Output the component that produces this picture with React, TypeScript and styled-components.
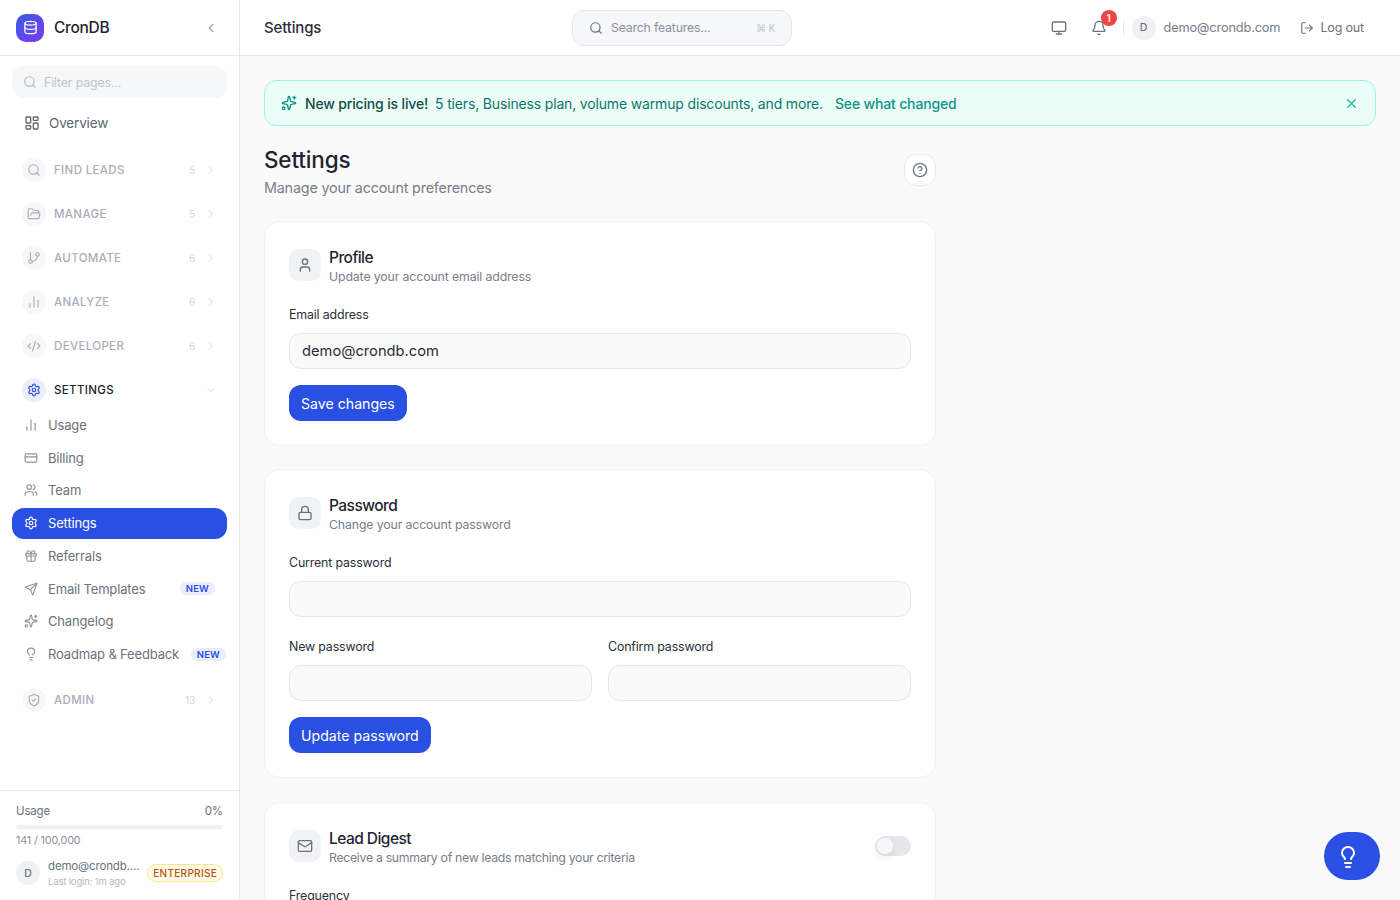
import React from 'react';
import styled, { createGlobalStyle } from 'styled-components';
import {
	Bell,
	ChartNoAxesColumn,
	ChevronDown,
	ChevronLeft,
	ChevronRight,
	CircleHelp,
	CodeXml,
	CreditCard,
	Database,
	FolderOpen,
	Gift,
	GitBranch,
	LayoutDashboard,
	Lightbulb,
	Lock,
	LogOut,
	Mail,
	Monitor,
	Search,
	Send,
	Settings,
	ShieldCheck,
	Sparkles,
	User,
	Users,
	X
} from 'lucide-react';

const BLUE = '#2a4fe3';

const closedGroups = [
	{ label: 'FIND LEADS', count: 5, icon: Search },
	{ label: 'MANAGE', count: 5, icon: FolderOpen },
	{ label: 'AUTOMATE', count: 6, icon: GitBranch },
	{ label: 'ANALYZE', count: 6, icon: ChartNoAxesColumn },
	{ label: 'DEVELOPER', count: 6, icon: CodeXml }
];

const settingsItems = [
	{ label: 'Usage', icon: ChartNoAxesColumn },
	{ label: 'Billing', icon: CreditCard },
	{ label: 'Team', icon: Users },
	{ label: 'Settings', icon: Settings, active: true },
	{ label: 'Referrals', icon: Gift },
	{ label: 'Email Templates', icon: Send, isNew: true },
	{ label: 'Changelog', icon: Sparkles },
	{ label: 'Roadmap & Feedback', icon: Lightbulb, isNew: true, wide: true }
];

export default function App() {
	return (
		<Page>
			<GlobalStyle />
			<Sidebar>
				<Brand>
					<LogoMark>
						<Database size={15} strokeWidth={2} />
					</LogoMark>
					<BrandName>CronDB</BrandName>
					<ChevronLeft size={14} color="#9ca3af" />
				</Brand>
				<Nav>
					<FilterBox>
						<Search size={14} color="#b4b8c2" />
						<span>Filter pages...</span>
					</FilterBox>
					<OverviewLink>
						<LayoutDashboard size={16} />
						Overview
					</OverviewLink>
					{closedGroups.map(group => (
						<GroupRow key={group.label}>
							<GroupIcon>
								<group.icon size={14} />
							</GroupIcon>
							<GroupLabel>{group.label}</GroupLabel>
							<GroupCount>{group.count}</GroupCount>
							<ChevronRight size={12} color="#d1d5db" />
						</GroupRow>
					))}
					<GroupRow>
						<GroupIcon $open>
							<Settings size={14} />
						</GroupIcon>
						<GroupLabel $open>SETTINGS</GroupLabel>
						<ChevronDown size={12} color="#d1d5db" />
					</GroupRow>
					<SubList>
						{settingsItems.map(item => (
							<SubItem key={item.label} $active={item.active} $wide={item.wide}>
								<item.icon size={14} />
								<SubLabel>{item.label}</SubLabel>
								{item.isNew && <NewBadge>NEW</NewBadge>}
							</SubItem>
						))}
					</SubList>
					<AdminRow>
						<GroupIcon>
							<ShieldCheck size={14} />
						</GroupIcon>
						<GroupLabel>ADMIN</GroupLabel>
						<GroupCount>13</GroupCount>
						<ChevronRight size={12} color="#d1d5db" />
					</AdminRow>
				</Nav>
				<SideFooter>
					<UsageHead>
						<span>Usage</span>
						<span>0%</span>
					</UsageHead>
					<UsageTrack />
					<UsageCount>141 / 100,000</UsageCount>
					<AccountRow>
						<Avatar>D</Avatar>
						<AccountText>
							<AccountEmail>demo@crondb.com</AccountEmail>
							<LastLogin>Last login: 1m ago</LastLogin>
						</AccountText>
						<PlanBadge>ENTERPRISE</PlanBadge>
					</AccountRow>
				</SideFooter>
			</Sidebar>
			<Column>
				<TopBar>
					<TopTitle>Settings</TopTitle>
					<SearchBox>
						<Search size={14} color="#6b7280" />
						<SearchText>Search features...</SearchText>
						<Shortcut>⌘ K</Shortcut>
					</SearchBox>
					<TopActions>
						<Monitor size={16} color="#6b7280" />
						<BellWrap>
							<Bell size={16} color="#6b7280" />
							<BellBadge>1</BellBadge>
						</BellWrap>
						<Divider />
						<Avatar>D</Avatar>
						<TopEmail>demo@crondb.com</TopEmail>
						<LogoutLink>
							<LogOut size={14} />
							Log out
						</LogoutLink>
					</TopActions>
				</TopBar>
				<Main>
					<Banner>
						<Sparkles size={16} color="#0d9488" />
						<BannerStrong>New pricing is live!</BannerStrong>
						<BannerText>5 tiers, Business plan, volume warmup discounts, and more.</BannerText>
						<BannerLink>See what changed</BannerLink>
						<BannerClose>
							<X size={15} color="#14b8a6" />
						</BannerClose>
					</Banner>
					<Content>
						<PageHead>
							<div>
								<PageTitle>Settings</PageTitle>
								<PageSub>Manage your account preferences</PageSub>
							</div>
							<HelpButton>
								<CircleHelp size={16} />
							</HelpButton>
						</PageHead>
						<Card>
							<CardHead>
								<CardIcon>
									<User size={16} />
								</CardIcon>
								<CardTitles>
									<CardTitle>Profile</CardTitle>
									<CardSub>Update your account email address</CardSub>
								</CardTitles>
							</CardHead>
							<Label>Email address</Label>
							<Field defaultValue="demo@crondb.com" />
							<PrimaryButton>Save changes</PrimaryButton>
						</Card>
						<Card>
							<CardHead>
								<CardIcon>
									<Lock size={16} />
								</CardIcon>
								<CardTitles>
									<CardTitle>Password</CardTitle>
									<CardSub>Change your account password</CardSub>
								</CardTitles>
							</CardHead>
							<Label>Current password</Label>
							<Field type="password" />
							<FieldGrid>
								<div>
									<Label>New password</Label>
									<Field type="password" />
								</div>
								<div>
									<Label>Confirm password</Label>
									<Field type="password" />
								</div>
							</FieldGrid>
							<PrimaryButton>Update password</PrimaryButton>
						</Card>
						<Card>
							<CardHead>
								<CardIcon>
									<Mail size={16} />
								</CardIcon>
								<CardTitles>
									<CardTitle>Lead Digest</CardTitle>
									<CardSub $tight>Receive a summary of new leads matching your criteria</CardSub>
								</CardTitles>
								<Toggle>
									<ToggleKnob />
								</Toggle>
							</CardHead>
							<Label>Frequency</Label>
							<Field />
						</Card>
					</Content>
				</Main>
			</Column>
			<HelpFab>
				<Lightbulb size={24} />
			</HelpFab>
		</Page>
	);
}

const GlobalStyle = createGlobalStyle`
	html, body {
		margin: 0;
		height: 100%;
		overflow: hidden;
	}

	body {
		font-family: Inter, "Liberation Sans", sans-serif;
		letter-spacing: -0.01em;
		background: #fafafa;
	}

	* {
		box-sizing: border-box;
	}
`;

const Page = styled.div`
	display: flex;
	height: 100vh;
`;

const Sidebar = styled.aside`
	display: flex;
	flex-direction: column;
	flex: 0 0 240px;
	min-width: 0;
	height: 100%;
	background: #fff;
	border-right: 1px solid #e5e7eb;
`;

const Brand = styled.div`
	display: flex;
	align-items: center;
	flex: 0 0 56px;
	padding: 0 21px 0 16px;
	border-bottom: 1px solid #e5e7eb;
`;

const LogoMark = styled.div`
	display: flex;
	align-items: center;
	justify-content: center;
	width: 28px;
	height: 28px;
	border-radius: 10px;
	color: #fff;
	background: linear-gradient(135deg, #3b5be8, #7c3aed);
`;

const BrandName = styled.div`
	flex: 1;
	margin-left: 10px;
	font-size: 15.5px;
	font-weight: 500;
	letter-spacing: -0.02em;
	color: #1f2430;
`;

const Nav = styled.nav`
	flex: 1;
	min-height: 0;
	padding: 10px 12px 0;
	overflow: hidden;
`;

const FilterBox = styled.div`
	display: flex;
	align-items: center;
	gap: 7px;
	height: 32px;
	padding: 0 11px;
	border-radius: 12px;
	background: #f6f7f9;
	font-size: 12.4px;
	color: #c0c4cc;
`;

const OverviewLink = styled.div`
	display: flex;
	align-items: center;
	gap: 9px;
	height: 32px;
	margin: 9px 0 8.5px;
	padding: 0 12px;
	font-size: 13.5px;
	color: #5f6675;
`;

const GroupRow = styled.div`
	display: flex;
	align-items: center;
	height: 44px;
	padding: 0 10px;
`;

const AdminRow = styled(GroupRow)`
	margin-top: 8.5px;
`;

const GroupIcon = styled.div<{ $open?: boolean }>`
	display: flex;
	align-items: center;
	justify-content: center;
	width: 24px;
	height: 24px;
	border-radius: 50%;
	background: ${p => (p.$open ? '#e9edfc' : '#f6f7f9')};
	color: ${p => (p.$open ? BLUE : '#a9aeb9')};
`;

const GroupLabel = styled.div<{ $open?: boolean }>`
	flex: 1;
	margin-left: 8px;
	font-size: 11.5px;
	font-weight: 500;
	letter-spacing: 0.03em;
	color: ${p => (p.$open ? '#1f2430' : '#a9aeb9')};
`;

const GroupCount = styled.span`
	margin-right: 10px;
	font-size: 10px;
	color: #d1d5db;
`;

const SubList = styled.div`
	display: flex;
	flex-direction: column;
	gap: 2px;
	margin-top: -2px;
`;

const SubItem = styled.div<{ $active?: boolean; $wide?: boolean }>`
	display: flex;
	align-items: center;
	gap: 10px;
	height: 30.75px;
	padding: 0 ${p => (p.$wide ? '1px' : '12px')} 0 12px;
	border-radius: 12px;
	background: ${p => (p.$active ? BLUE : 'transparent')};
	color: ${p => (p.$active ? '#fff' : '#6b7280')};
	font-size: 13px;

	svg {
		color: ${p => (p.$active ? '#fff' : '#8f95a3')};
	}
`;

const SubLabel = styled.span`
	flex: 1;
	white-space: nowrap;
`;

const NewBadge = styled.span`
	padding: 1px 6px;
	border-radius: 8px;
	background: #e9edfc;
	color: ${BLUE};
	font-size: 9.5px;
	font-weight: 600;
	letter-spacing: 0.02em;
`;

const SideFooter = styled.div`
	flex: 0 0 110px;
	padding: 12px 16px 0;
	border-top: 1px solid #e5e7eb;
`;

const UsageHead = styled.div`
	display: flex;
	justify-content: space-between;
	font-size: 11.5px;
	line-height: 16px;
	color: #6b7280;
`;

const UsageTrack = styled.div`
	height: 4px;
	margin-top: 6px;
	border-radius: 2px;
	background: #f0f1f3;
`;

const UsageCount = styled.div`
	margin-top: 4px;
	font-size: 10.8px;
	line-height: 16px;
	color: #8b909c;
`;

const AccountRow = styled.div`
	display: flex;
	align-items: center;
	margin-top: 9px;
`;

const Avatar = styled.div`
	display: flex;
	align-items: center;
	justify-content: center;
	flex: 0 0 24px;
	height: 24px;
	border-radius: 50%;
	background: #f0f1f4;
	font-size: 10.5px;
	font-weight: 500;
	color: #6b7280;
`;

const AccountText = styled.div`
	flex: 1;
	min-width: 0;
	margin-left: 8px;
`;

const AccountEmail = styled.div`
	overflow: hidden;
	font-size: 11.5px;
	line-height: 17px;
	white-space: nowrap;
	text-overflow: ellipsis;
	color: #6b7280;
`;

const LastLogin = styled.div`
	font-size: 9.5px;
	line-height: 13px;
	color: #b4b8c2;
`;

const PlanBadge = styled.span`
	margin-left: 6px;
	padding: 2px 5px;
	border: 1px solid #fde68a;
	border-radius: 10px;
	background: #fffbeb;
	color: #b45309;
	font-size: 10px;
	font-weight: 500;
	letter-spacing: 0.03em;
`;

const Column = styled.div`
	flex: 1;
	min-width: 0;
	display: flex;
	flex-direction: column;
`;

const TopBar = styled.header`
	display: flex;
	align-items: center;
	flex: 0 0 56px;
	padding: 0 36px 0 24px;
	background: #fff;
	border-bottom: 1px solid #e5e7eb;
`;

const TopTitle = styled.div`
	flex: 0 0 308px;
	font-size: 15px;
	font-weight: 500;
	color: #2a2f3a;
`;

const SearchBox = styled.div`
	display: flex;
	align-items: center;
	width: 220px;
	height: 36px;
	padding: 0 16px;
	border: 1px solid #e5e7eb;
	border-radius: 12px;
	background: #f6f7f9;
`;

const SearchText = styled.span`
	flex: 1;
	margin-left: 8px;
	font-size: 12.25px;
	color: #8b909c;
`;

const Shortcut = styled.span`
	font-size: 10px;
	color: #c0c4cc;
`;

const TopActions = styled.div`
	display: flex;
	align-items: center;
	margin-left: auto;
`;

const BellWrap = styled.div`
	position: relative;
	display: flex;
	margin-left: 24px;
`;

const BellBadge = styled.span`
	position: absolute;
	top: -10px;
	right: -10px;
	display: flex;
	align-items: center;
	justify-content: center;
	width: 16px;
	height: 16px;
	border-radius: 50%;
	background: #ef4444;
	color: #fff;
	font-size: 10px;
	font-weight: 600;
`;

const Divider = styled.div`
	width: 1px;
	height: 16px;
	margin: 0 8px 0 16px;
	background: #e5e7eb;
`;

const TopEmail = styled.span`
	margin-left: 8px;
	font-size: 12.8px;
	color: #787e8c;
`;

const LogoutLink = styled.div`
	display: flex;
	align-items: center;
	gap: 6px;
	margin-left: 20px;
	font-size: 12.5px;
	color: #6b7280;
`;

const Main = styled.main`
	flex: 1;
	min-height: 0;
	overflow: hidden;
	padding: 24px;
`;

const Banner = styled.div`
	display: flex;
	align-items: center;
	height: 46px;
	padding: 0 16px;
	border: 1px solid #99f6e4;
	border-radius: 12px;
	background: #ecfdf7;
	font-size: 14px;
`;

const BannerStrong = styled.span`
	margin-left: 8px;
	font-weight: 500;
	color: #134e4a;
`;

const BannerText = styled.span`
	margin-left: 7px;
	color: #0f766e;
`;

const BannerLink = styled.span`
	margin-left: 12px;
	font-weight: 500;
	color: #0d9488;
`;

const BannerClose = styled.span`
	display: flex;
	margin-left: auto;
`;

const Content = styled.div`
	width: 672px;
`;

const PageHead = styled.div`
	display: flex;
	justify-content: space-between;
	align-items: flex-start;
	margin: 20px 0 22.6px;
`;

const PageTitle = styled.h1`
	margin: 0;
	font-size: 22.5px;
	line-height: 27px;
	font-weight: 500;
	color: #1f2430;
`;

const PageSub = styled.p`
	margin: 5px 0 0;
	font-size: 14.3px;
	line-height: 20px;
	color: #787e8c;
`;

const HelpButton = styled.div`
	display: flex;
	align-items: center;
	justify-content: center;
	width: 32px;
	height: 32px;
	margin-top: 8px;
	border: 1px solid #e9eaee;
	border-radius: 12px;
	background: #fff;
	color: #6b7280;
`;

const Card = styled.section`
	margin-bottom: 23.8px;
	padding: 24px;
	border: 1px solid #f0f1f3;
	border-radius: 16px;
	background: #fff;
`;

const CardHead = styled.div`
	display: flex;
	align-items: flex-start;
	gap: 8px;
	margin-bottom: 19px;
`;

const CardIcon = styled.div`
	display: flex;
	align-items: center;
	justify-content: center;
	width: 32px;
	height: 32px;
	margin-top: 3px;
	border-radius: 10px;
	background: #f1f2f5;
	color: #6b7280;
`;

const CardTitles = styled.div`
	flex: 1;
	padding-bottom: 2px;
`;

const CardTitle = styled.div`
	font-size: 15.5px;
	line-height: 23px;
	font-weight: 500;
	letter-spacing: -0.035em;
	color: #1f2430;
`;

const CardSub = styled.div<{ $tight?: boolean }>`
	font-size: 12.3px;
	line-height: 15px;
	letter-spacing: ${p => (p.$tight ? '-0.025em' : '-0.01em')};
	color: #787e8c;
`;

const Label = styled.label`
	display: block;
	margin-bottom: 9px;
	padding-top: 1px;
	font-size: 12.4px;
	line-height: 18px;
	font-weight: 400;
	color: #2a2f3a;
`;

const Field = styled.input`
	display: block;
	width: 100%;
	height: 36px;
	margin-bottom: 16px;
	padding: 1px 12px 0;
	border: 1px solid #e5e7eb;
	border-radius: 12px;
	background: #fafafa;
	font-family: inherit;
	font-size: 14.7px;
	letter-spacing: 0;
	color: #2a2f3a;
`;

const FieldGrid = styled.div`
	display: grid;
	grid-template-columns: 1fr 1fr;
	gap: 16px;
	margin-top: 20px;
`;

const PrimaryButton = styled.button`
	display: block;
	height: 36px;
	padding: 1px 12px 0;
	border: 0;
	border-radius: 12px;
	background: ${BLUE};
	color: #fff;
	font-family: inherit;
	font-size: 14.15px;
	font-weight: 400;
`;

const Toggle = styled.div`
	display: flex;
	align-items: center;
	width: 36px;
	height: 20px;
	margin-top: 9px;
	padding: 2px;
	border-radius: 10px;
	background: #e5e7eb;
`;

const ToggleKnob = styled.div`
	width: 16px;
	height: 16px;
	border-radius: 50%;
	background: #f6f7f9;
	box-shadow: 0 4px 8px rgba(0, 0, 0, 0.08);
`;

const HelpFab = styled.div`
	position: fixed;
	right: 20px;
	bottom: 20px;
	display: flex;
	align-items: center;
	justify-content: center;
	width: 56px;
	height: 48px;
	padding: 2px 8px 0 0;
	border-radius: 24px;
	background: ${BLUE};
	color: #fff;
`;
